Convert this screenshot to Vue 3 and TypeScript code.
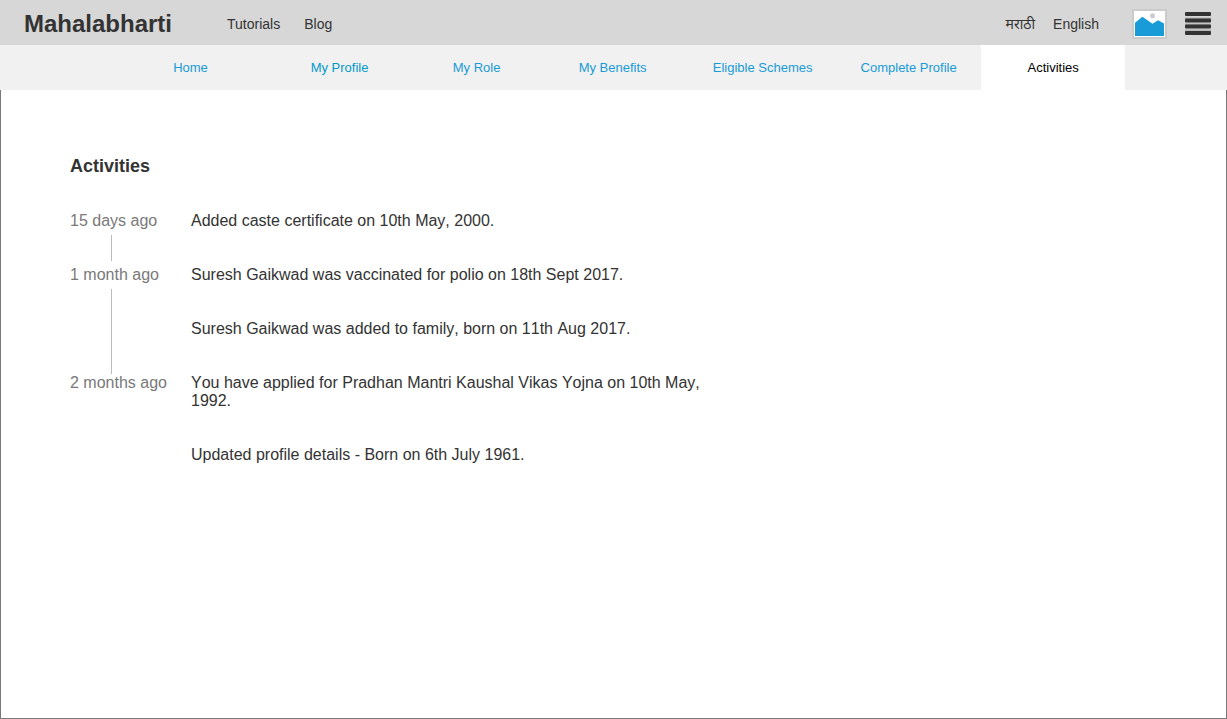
<script setup lang="ts">
interface Tab {
  label: string
  tone?: 'deep' | 'active'
}

interface ActivityGroup {
  when: string
  entries: string[]
}

const tabs: Tab[] = [
  { label: 'Home' },
  { label: 'My Profile', tone: 'deep' },
  { label: 'My Role' },
  { label: 'My Benefits' },
  { label: 'Eligible Schemes' },
  { label: 'Complete Profile' },
  { label: 'Activities', tone: 'active' },
]

const groups: ActivityGroup[] = [
  { when: '15 days ago', entries: ['Added caste certificate on 10th May, 2000.'] },
  {
    when: '1 month ago',
    entries: [
      'Suresh Gaikwad was vaccinated for polio on 18th Sept 2017.',
      'Suresh Gaikwad was added to family, born on 11th Aug 2017.',
    ],
  },
  {
    when: '2 months ago',
    entries: [
      'You have applied for Pradhan Mantri Kaushal Vikas Yojna on 10th May, 1992.',
      'Updated profile details - Born on 6th July 1961.',
    ],
  },
]
</script>

<template>
  <div class="page">
    <header class="topbar">
      <a class="brand" href="#">Mahalabharti</a>
      <nav class="links" aria-label="Site">
        <a href="#">Tutorials</a>
        <a href="#">Blog</a>
      </nav>
      <div class="languages">
        <a href="#" lang="mr">मराठी</a>
        <a href="#" lang="en">English</a>
      </div>
      <button class="icon-button" type="button" aria-label="Profile picture">
        <svg width="35" height="30" viewBox="0 0 35 30">
          <rect x="1" y="1" width="33" height="28" fill="#fff" stroke="#cbcbcb" stroke-width="2" />
          <circle cx="20.5" cy="6.7" r="2.5" fill="#cbcbcb" />
          <path d="M3 13.8 L10.4 7.8 L20.5 14.8 L26 11.2 L32 14.6 V27 H3 Z" fill="#189bd7" />
        </svg>
      </button>
      <button class="icon-button menu" type="button" aria-label="Menu">
        <svg width="26" height="23" viewBox="0 0 26 23">
          <g fill="#b4b4b4">
            <rect y="5.5" width="26" height="2" />
            <rect y="11.5" width="26" height="2" />
            <rect y="17.5" width="26" height="2" />
          </g>
          <g fill="#333">
            <rect y="0" width="26" height="4" rx="1" />
            <rect y="6.5" width="26" height="4" rx="1" />
            <rect y="12.5" width="26" height="4" rx="1" />
            <rect y="19" width="26" height="4" rx="1" />
          </g>
        </svg>
      </button>
    </header>

    <nav class="tabs" aria-label="Sections">
      <a
        v-for="tab in tabs"
        :key="tab.label"
        class="tab"
        :class="tab.tone"
        :aria-current="tab.tone === 'active' ? 'page' : undefined"
        href="#"
      >{{ tab.label }}</a>
    </nav>

    <main class="content">
      <h1>Activities</h1>
      <section v-for="(group, i) in groups" :key="group.when" class="group">
        <div class="time" :class="{ long: group.entries.length > 1 }">
          <span>{{ group.when }}</span>
          <i v-if="i < groups.length - 1" class="connector"></i>
        </div>
        <ul class="entries">
          <li v-for="entry in group.entries" :key="entry">{{ entry }}</li>
        </ul>
      </section>
    </main>
  </div>
</template>

<style>
body {
  margin: 0;
}
</style>

<style scoped>
.page {
  display: flex;
  flex-direction: column;
  min-height: 100vh;
  font-family: "Liberation Sans", Arial, "Noto Sans", sans-serif;
  color: #333;
  background: #fff;
}

a {
  color: inherit;
  text-decoration: none;
}

.topbar {
  display: flex;
  align-items: center;
  height: 45px;
  padding: 2px 16px 0 24px;
  box-sizing: border-box;
  background: #d7d7d7;
}

.brand {
  font-size: 24px;
  line-height: 29px;
  font-weight: 700;
}

.links,
.languages {
  display: flex;
  font-size: 14px;
  line-height: 16px;
}

.links {
  gap: 24px;
  margin-left: 55px;
}

.languages {
  gap: 18px;
  margin-left: auto;
}

.icon-button {
  display: block;
  margin: 0 0 0 33px;
  padding: 0;
  border: 0;
  background: none;
}

.icon-button.menu {
  margin-left: 18px;
}

.icon-button svg {
  display: block;
}

.tabs {
  display: grid;
  grid-template-columns: 143fr 155fr 119fr 153fr 147fr 145fr 144fr;
  height: 45px;
  padding: 0 8.3% 0 9.7%;
  background: #f1f1f1;
}

.tab {
  font-size: 13px;
  line-height: 45px;
  text-align: center;
  white-space: nowrap;
  color: #189bd7;
}

.tab.deep {
  color: #0099cc;
}

.tab.active {
  background: #fff;
  color: #000;
}

.content {
  flex: 1;
  padding: 66px 70px 40px 69px;
  border: 1px solid #797979;
  border-top: 0;
}

h1 {
  margin: 0 0 35px;
  font-size: 18px;
  line-height: 21px;
  font-weight: 700;
}

.group {
  display: grid;
  grid-template-columns: 121px minmax(0, 520px);
}

.time {
  display: flex;
  flex-direction: column;
  font-size: 16px;
  line-height: 18px;
  color: #797979;
}

.connector {
  flex: 1;
  width: 1px;
  margin: 5px 0 5px 41px;
  background: #bcbcbc;
}

.long .connector {
  margin-bottom: 0;
}

.entries {
  margin: 0;
  padding: 0;
  list-style: none;
  font-size: 16px;
  line-height: 18px;
  font-kerning: none;
}

.entries li {
  padding-bottom: 36px;
}
</style>
